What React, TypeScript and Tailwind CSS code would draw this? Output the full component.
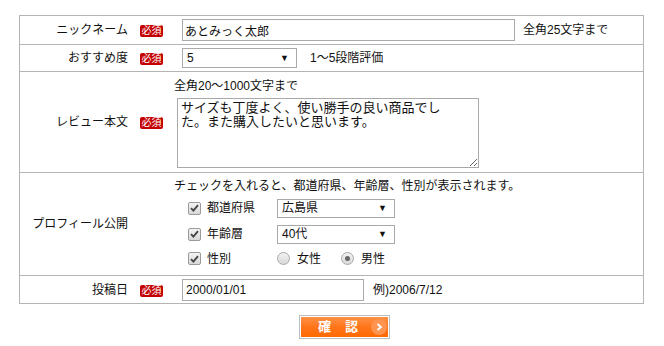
import { ReactNode } from "react";

const font = "font-['Liberation_Sans','Noto_Sans_CJK_JP',sans-serif]";

function Badge() {
  return (
    <span className="inline-flex h-[12px] w-[23px] items-center justify-center rounded-[2px] bg-[#c40000] text-[10px] leading-none text-white">
      必須
    </span>
  );
}

function Row({
  label,
  required,
  first,
  children,
  className = "",
}: {
  label: string;
  required?: boolean;
  first?: boolean;
  children: ReactNode;
  className?: string;
}) {
  return (
    <div className={`flex items-center ${first ? "" : "border-t border-[#b4b4b4]"} ${className}`}>
      <div className="w-[117px] shrink-0 pr-[9px] text-right">{label}</div>
      <div className="w-[37px] shrink-0 pl-[3px]">{required && <Badge />}</div>
      <div className="flex-1">{children}</div>
    </div>
  );
}

function FakeSelect({ value, className }: { value: string; className: string }) {
  return (
    <div className={`relative flex items-center border border-[#a9a9a9] bg-white pl-[4px] ${className}`}>
      <span>{value}</span>
      <span className="absolute right-[7px] top-1/2 -translate-y-1/2 text-[9px] leading-none">▼</span>
    </div>
  );
}

function Check({ label }: { label: string }) {
  return (
    <div className="flex w-[89px] items-center">
      <span className="flex h-[13px] w-[13px] items-center justify-center rounded-[2px] border border-[#9a9a9a] bg-gradient-to-b from-[#f4f4f4] to-[#d8d8d8]">
        <svg width="9" height="8" viewBox="0 0 9 8">
          <path d="M1 4.2 L3.4 6.6 L8 1.2" fill="none" stroke="#444" strokeWidth="1.8" />
        </svg>
      </span>
      <span className="ml-[6px]">{label}</span>
    </div>
  );
}

function Radio({ label, checked }: { label: string; checked?: boolean }) {
  return (
    <div className="flex items-center">
      <span className="flex h-[13px] w-[13px] items-center justify-center rounded-full border border-[#a8a8a8] bg-gradient-to-b from-[#f2f2f2] to-[#d9d9d9]">
        {checked && <span className="h-[5px] w-[5px] rounded-full bg-[#666]" />}
      </span>
      <span className="ml-[7px]">{label}</span>
    </div>
  );
}

export default function App() {
  return (
    <div className={`${font} min-h-[346px] w-[664px] bg-white pt-[15px] text-[12px] leading-[16px] text-[#111]`}>
      <div className="ml-[19px] w-[625px] border border-[#b4b4b4]">
        <Row label="ニックネーム" required first className="h-[28px]">
          <div className="flex items-center">
            <input
              type="text"
              defaultValue="あとみっく太郎"
              className="ml-[8px] h-[22px] w-[333px] border border-[#a9a9a9] px-[2px] text-[12px] outline-none"
            />
            <span className="ml-[8px]">全角25文字まで</span>
          </div>
        </Row>
        <Row label="おすすめ度" required className="h-[27px]">
          <div className="flex items-center">
            <FakeSelect value="5" className="ml-[8px] h-[20px] w-[115px]" />
            <span className="ml-[13px]">1～5段階評価</span>
          </div>
        </Row>
        <Row label="レビュー本文" required className="h-[101px]">
          <div className="flex flex-col pb-[4px] pt-[5px]">
            <span>全角20～1000文字まで</span>
            <textarea
              defaultValue="サイズも丁度よく、使い勝手の良い商品でした。また購入したいと思います。"
              className="ml-[3px] mt-[4px] h-[70px] w-[302px] border border-[#a9a9a9] pl-[3px] pr-[14px] pt-[1px] font-['Noto_Sans_CJK_JP',monospace] text-[13px] leading-[14px] outline-none"
            />
          </div>
        </Row>
        <Row label="プロフィール公開" className="h-[103px]">
          <div className="flex flex-col pb-[8px] pt-[4px]">
            <span>チェックを入れると、都道府県、年齢層、性別が表示されます。</span>
            <div className="mt-[5px] flex flex-col gap-[7px] pl-[14px]">
              <div className="flex items-center">
                <Check label="都道府県" />
                <FakeSelect value="広島県" className="h-[19px] w-[118px]" />
              </div>
              <div className="flex items-center">
                <Check label="年齢層" />
                <FakeSelect value="40代" className="h-[19px] w-[118px]" />
              </div>
              <div className="flex h-[16px] items-center">
                <Check label="性別" />
                <div className="flex items-center gap-[20px]">
                  <Radio label="女性" />
                  <Radio label="男性" checked />
                </div>
              </div>
            </div>
          </div>
        </Row>
        <Row label="投稿日" required className="h-[28px]">
          <div className="flex items-center">
            <input
              type="text"
              defaultValue="2000/01/01"
              className="ml-[8px] h-[22px] w-[182px] border border-[#a9a9a9] px-[3px] text-[12px] outline-none"
            />
            <span className="ml-[9px]">例)2006/7/12</span>
          </div>
        </Row>
      </div>
      <div className="mt-[11px] pl-[299px]">
        <button className="flex h-[24px] w-[91px] items-center border border-[#bdbdbd] bg-white p-[1px]">
          <span className="flex h-full w-full items-center bg-gradient-to-b from-[#ff9243] via-[#ff7518] to-[#ff6a00] pl-[17px] text-[13px] font-bold text-white">
            <span className="tracking-[14px]">確認</span>
            <span className="ml-[-1px] flex h-[16px] w-[16px] items-center justify-center rounded-full bg-[#ff9350]">
              <svg width="7" height="8" viewBox="0 0 7 8">
                <path d="M1.5 1 L5 4 L1.5 7" fill="none" stroke="#fff" strokeWidth="1.8" />
              </svg>
            </span>
          </span>
        </button>
      </div>
    </div>
  );
}
